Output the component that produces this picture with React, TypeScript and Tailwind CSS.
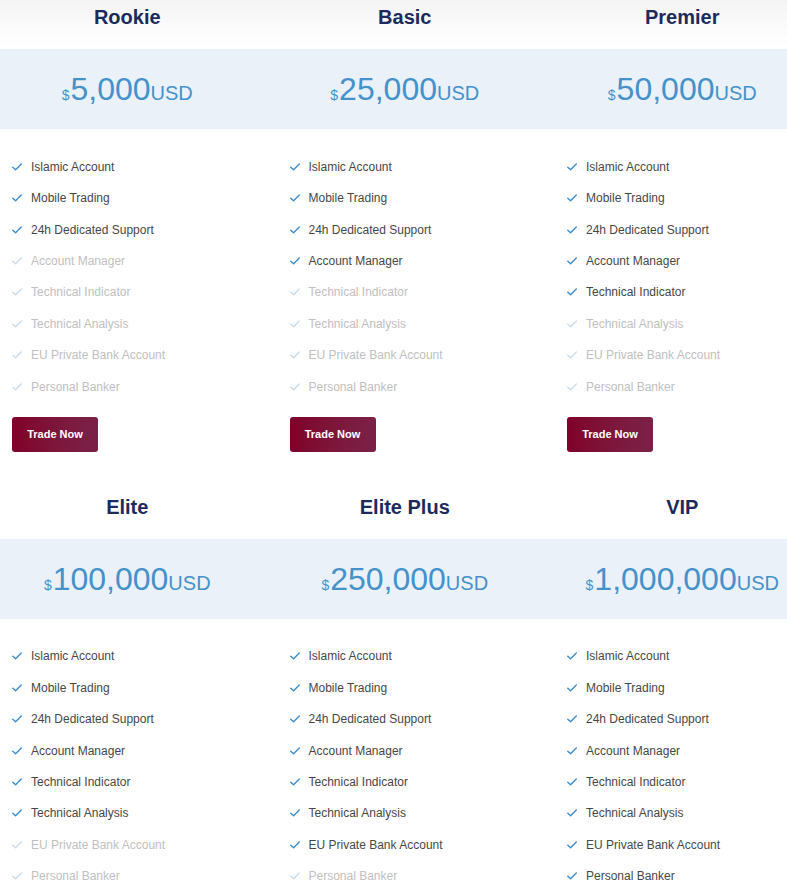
import React from "react";

const features = [
  "Islamic Account",
  "Mobile Trading",
  "24h Dedicated Support",
  "Account Manager",
  "Technical Indicator",
  "Technical Analysis",
  "EU Private Bank Account",
  "Personal Banker",
];

const plans = [
  { name: "Rookie", price: "5,000", enabled: 3 },
  { name: "Basic", price: "25,000", enabled: 4 },
  { name: "Premier", price: "50,000", enabled: 5 },
  { name: "Elite", price: "100,000", enabled: 6 },
  { name: "Elite Plus", price: "250,000", enabled: 7 },
  { name: "VIP", price: "1,000,000", enabled: 8 },
];

function Check({ active }: { active: boolean }) {
  return (
    <svg width="10" height="8" viewBox="0 0 10 8" fill="none" className="shrink-0">
      <path
        d="M0.8 4.2 L3.6 6.8 L9.3 1"
        stroke={active ? "#3f8dca" : "#c9dcec"}
        strokeWidth="1.4"
        strokeLinecap="round"
        strokeLinejoin="round"
      />
    </svg>
  );
}

function PlanCard({ name, price, enabled }: { name: string; price: string; enabled: number }) {
  return (
    <div className="flex flex-col">
      {/* Title */}
      <div className="pt-[5px] pb-[20px] pr-[23px] text-center">
        <h2 className="text-[20px] leading-[24px] font-bold text-[#1e2a5c]">{name}</h2>
      </div>

      {/* Price band */}
      <div className="h-[80px] bg-[#eaf1f8] pr-[23px] flex items-center justify-center text-[#4592cb]">
        <div className="flex items-baseline">
          <span className="text-[14px] leading-none mr-[1px]">$</span>
          <span className="text-[32px] leading-none">{price}</span>
          <span className="text-[20px] leading-none">USD</span>
        </div>
      </div>

      {/* Features */}
      <ul className="pt-[22px] pl-[12px]">
        {features.map((f, i) => {
          const active = i < enabled;
          return (
            <li key={f} className="h-[31.45px] flex items-center gap-[9px]">
              <Check active={active} />
              <span className={`text-[12px] ${active ? "text-[#474747]" : "text-[#c0c0c0]"}`}>{f}</span>
            </li>
          );
        })}
      </ul>

      {/* Button */}
      <div className="pl-[12px] pt-[14px]">
        <button className="w-[86px] h-[35px] rounded-[3px] bg-gradient-to-r from-[#80002a] to-[#7a2148] text-white text-[11px] font-bold">
          Trade Now
        </button>
      </div>
    </div>
  );
}

export default function App() {
  return (
    <div
      className="w-[787px] h-[893px] overflow-hidden bg-[linear-gradient(to_bottom,#f4f4f4,#ffffff_46px)]"
      style={{ fontFamily: '"Liberation Sans", Arial, sans-serif' }}
    >
      <div className="grid grid-cols-[repeat(3,277.5px)] gap-y-[38px] w-[832px]">
        {plans.map((p) => (
          <PlanCard key={p.name} {...p} />
        ))}
      </div>
    </div>
  );
}
